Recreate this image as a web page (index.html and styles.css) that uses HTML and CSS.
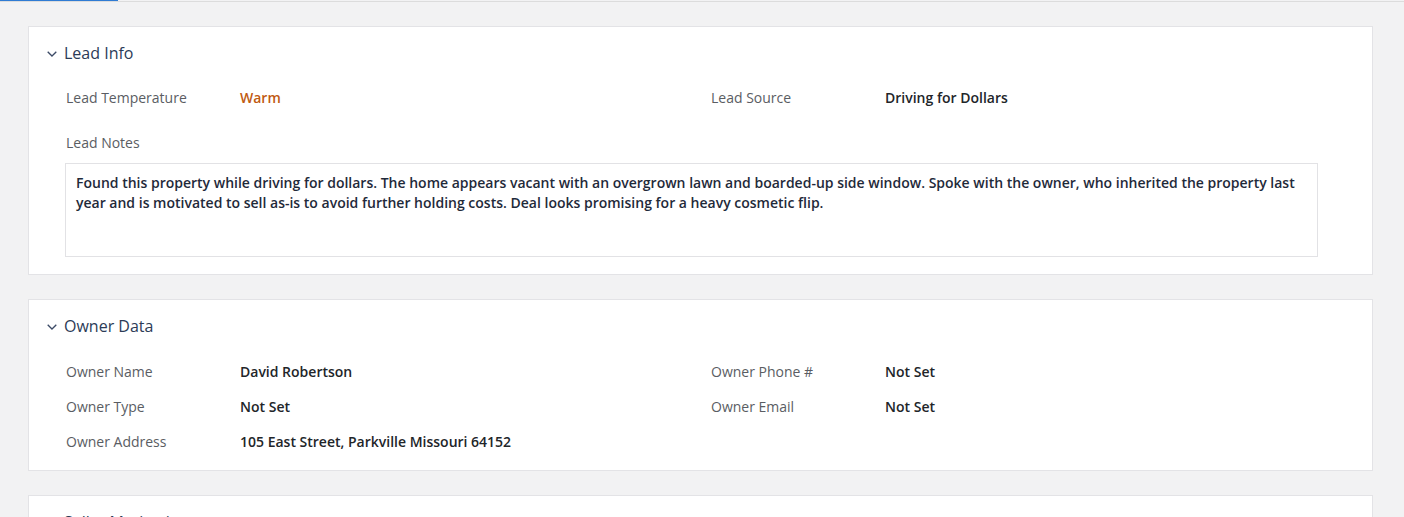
FILE: index.html
```html
<!DOCTYPE html>
<html lang="en">
<head>
<meta charset="utf-8">
<title>Lead Details</title>
<link rel="stylesheet" href="styles.css">
</head>
<body>
<div class="tabs"><span class="tab-indicator"></span></div>
<main class="sections">
  <section class="card">
    <h2 class="card-title">
      <svg class="chevron" width="10" height="6" viewBox="0 0 10 6"><path d="M0.7 0.7 L5 5 L9.3 0.7" fill="none" stroke="currentColor" stroke-width="1.3"/></svg>
      Lead Info
    </h2>
    <div class="fields">
      <span class="label">Lead Temperature</span><span class="value warm">Warm</span>
      <span class="label">Lead Source</span><span class="value">Driving for Dollars</span>
    </div>
    <div class="notes-block">
      <span class="label">Lead Notes</span>
      <div class="notes">Found this property while driving for dollars. The home appears vacant with an overgrown lawn and boarded-up side window. Spoke with the owner, who inherited the property last year and is motivated to sell as-is to avoid further holding costs. Deal looks promising for a heavy cosmetic flip.</div>
    </div>
  </section>

  <section class="card card-owner">
    <h2 class="card-title">
      <svg class="chevron" width="10" height="6" viewBox="0 0 10 6"><path d="M0.7 0.7 L5 5 L9.3 0.7" fill="none" stroke="currentColor" stroke-width="1.3"/></svg>
      Owner Data
    </h2>
    <div class="fields">
      <span class="label">Owner Name</span><span class="value">David Robertson</span>
      <span class="label">Owner Phone #</span><span class="value">Not Set</span>
      <span class="label">Owner Type</span><span class="value">Not Set</span>
      <span class="label">Owner Email</span><span class="value">Not Set</span>
      <span class="label">Owner Address</span><span class="value">105 East Street, Parkville Missouri 64152</span>
    </div>
  </section>

  <section class="card">
    <h2 class="card-title">
      <svg class="chevron" width="10" height="6" viewBox="0 0 10 6"><path d="M0.7 0.7 L5 5 L9.3 0.7" fill="none" stroke="currentColor" stroke-width="1.3"/></svg>
      Seller Motivation
    </h2>
  </section>
</main>
</body>
</html>
```

FILE: styles.css
```css
html, body {
  margin: 0;
  padding: 0;
  background: #f2f2f3;
  font-family: "Open Sans", "Liberation Sans", sans-serif;
  overflow: hidden;
}

.tabs {
  height: 1px;
  border-bottom: 1px solid #dcdcdc;
  background: transparent;
}

.tab-indicator {
  display: block;
  width: 118px;
  height: 1px;
  background: #2f7bd3;
}

.sections {
  display: flex;
  flex-direction: column;
  gap: 24px;
  padding: 24px 31px 0 28px;
}

.card {
  background: #ffffff;
  border: 1px solid #e3e3e6;
  padding: 15px 54px 17px 36px;
}

.card-title {
  display: flex;
  align-items: center;
  gap: 7px;
  margin: 0 0 0 -18px;
  font-size: 16px;
  font-weight: 400;
  line-height: 22px;
  color: #2c3b57;
}

.chevron {
  color: #3b4a66;
  margin-top: 1px;
}

.fields {
  display: grid;
  grid-template-columns: 174px 471px 174px 1fr;
  row-gap: 15px;
  margin-top: 24px;
  margin-left: 1px;
}

.card-owner {
  padding-bottom: 18px;
}

.card-owner .fields {
  margin-top: 25px;
}

.label {
  font-size: 14px;
  line-height: 20px;
  color: #5a5d63;
}

.value {
  font-size: 14px;
  line-height: 20px;
  font-weight: 600;
  color: #222529;
}

.warm {
  color: #c05a11;
}

.notes-block {
  display: flex;
  flex-direction: column;
  gap: 10px;
  margin-top: 25px;
}

.notes-block .label {
  margin-left: 1px;
}

.notes {
  border: 1px solid #e2e2e5;
  height: 72px;
  padding: 9px 10px 11px 10px;
  font-size: 14px;
  line-height: 20px;
  font-weight: 600;
  color: #1f2a3a;
}
```
